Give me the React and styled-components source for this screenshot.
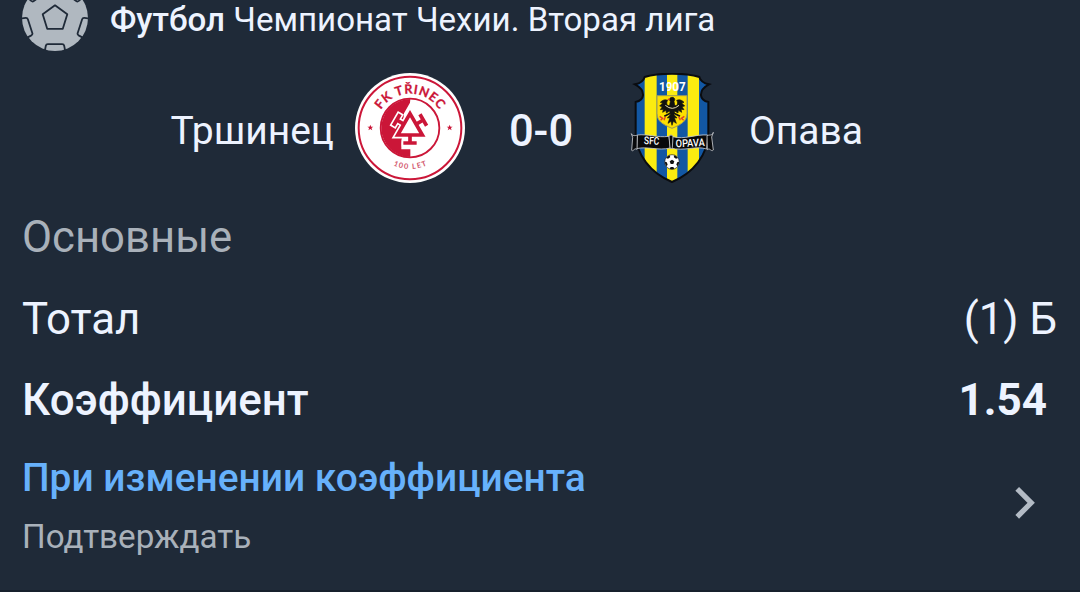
import React from 'react';
import styled, { createGlobalStyle } from 'styled-components';

const RED = '#cb1638';
const BLUE = '#1257a3';
const YELLOW = '#fbec10';
const MUTED = '#a9b1ba';

const GlobalStyle = createGlobalStyle`
  * { box-sizing: border-box; }
  body { margin: 0; background: #1f2a38; }
`;

const Slip = styled.main`
  display: flex;
  flex-direction: column;
  width: 1080px;
  height: 592px;
  overflow: hidden;
  color: #edf3ff;
  background: #1f2a38;
  border-bottom: 2px solid #17202c;
  font-family: Roboto, sans-serif;
`;

const Text = styled.span`
  display: block;
  font-size: ${props => props.$size}px;
  font-weight: ${props => props.$weight || 400};
  color: ${props => props.$color || 'inherit'};
  white-space: pre;
`;

const Header = styled.header`
  display: flex;
  height: 51px;
  padding-left: 22px;
  line-height: 40px;
`;

const BallIcon = styled.svg`
  width: 66px;
  height: 66px;
  margin: -15px 22px 0 0;
  flex: none;
`;

const Match = styled.section`
  display: grid;
  grid-template-columns: 334px 152px 110px 152px 1fr;
  align-items: center;
  height: 110px;
  margin-top: 22px;
  line-height: 52px;
`;

const Side = styled.div`
  padding-top: 5px;
  padding-left: ${props => (props.$align === 'left' ? 1 : 0)}px;
  text-align: ${props => props.$align};
`;

const Score = styled.div`
  padding-top: 7px;
  text-align: center;
`;

const Crest = styled.svg`
  display: block;
  width: 110px;
  height: 110px;
  margin: 0 auto;
`;

const Rows = styled.section`
  margin-top: 14px;
`;

const Row = styled.div`
  display: flex;
  justify-content: space-between;
  height: 81px;
  padding: 0 ${props => props.$end || 23}px 0 22px;
  line-height: ${props => props.$line || 82}px;
`;

const Setting = styled.section`
  display: flex;
  justify-content: space-between;
  align-items: center;
  margin-top: 8px;
  padding: 0 43px 0 22px;
`;

const SettingText = styled.div`
  display: flex;
  flex-direction: column;
  line-height: 59px;
`;

const Chevron = styled.svg`
  width: 24px;
  height: 36px;
  margin-bottom: 9px;
`;

function Football() {
    return (
        <BallIcon viewBox="0 0 66 66" fill="none" stroke="#1f2a38" strokeWidth="1.8" strokeLinejoin="round">
            <circle cx="33" cy="33" r="33" fill="#b0b8c0" stroke="none" />
            <path d="M33 20.3 45.3 29.2 40.8 43.8H25.2L20.7 29.2Z" />
            {[0, 72, 144, 216, 288].map(angle => (
                <path
                    key={angle}
                    d="M22.8 66 23.8 60.8Q24.2 59.2 25.8 59.2H40.2Q41.8 59.2 42.2 60.8L43.2 66"
                    transform={`rotate(${angle} 33 33)`}
                />
            ))}
        </BallIcon>
    );
}

function Arms({ width, bar, color }) {
    return (
        <g fill="none" stroke={color} strokeWidth={width}>
            <path d="M210 161 173 225H247Z" />
            {[0, 120, 240].map(angle => (
                <path
                    key={angle}
                    d={`M210 226V249M${210 - bar} 249H${210 + bar}`}
                    transform={`rotate(${angle} 210 203)`}
                />
            ))}
        </g>
    );
}

function TrinecCrest() {
    const star = 'M0-9 2.4-3 9-3 3.6 1.2 5.8 8 0 4-5.8 8-3.6 1.2-9-3-2.4-3Z';
    return (
        <Crest viewBox="45 39 330 330">
            <defs>
                <path id="trinec-top" d="M107 204A103 103 0 0 1 313 204" />
                <path id="trinec-bottom" d="M87 204A123 123 0 0 0 333 204" />
            </defs>
            <circle cx="210" cy="204" r="165" fill="#fff" />
            <circle cx="210" cy="204" r="154" fill="none" stroke={RED} strokeWidth="6" />
            <path d="M211 117A87 87 0 0 0 211 291V268H184V250L192 160 210 128Z" fill={RED} />
            <circle cx="210" cy="204" r="88" fill="none" stroke={RED} strokeWidth="5.5" />
            <Arms width={21} bar={25} color="#fff" />
            <path d="M210 161 173 225H247Z" fill="#fff" />
            <Arms width={11} bar={20} color={RED} />
            <path d={star} transform="translate(91 203)" fill={RED} />
            <path d={star} transform="translate(329 203)" fill={RED} />
            <text fill={RED} stroke={RED} strokeWidth="0.8" fontFamily="Lato, sans-serif" fontWeight="700" fontSize="38" textAnchor="middle">
                <textPath href="#trinec-top" startOffset="50%" textLength="208">FK TŘINEC</textPath>
            </text>
            <text fill="#d2556b" fontFamily="Lato, sans-serif" fontWeight="700" fontSize="22" textAnchor="middle">
                <textPath href="#trinec-bottom" startOffset="50%" textLength="104">100 LET</textPath>
            </text>
        </Crest>
    );
}

function OpavaCrest() {
    const shield = 'M186 41C155 41 126 44 104 51C101 62 90 70 75 73C92 82 100 92 99 106C98 118 90 123 77 126V222C80 285 120 338 186 366C252 338 292 285 295 222V126C282 123 274 118 273 106C272 92 280 82 297 73C282 70 271 62 268 51C246 44 217 41 186 41Z';
    return (
        <Crest viewBox="21 39 330 330">
            <defs>
                <clipPath id="opava-shield"><path d={shield} /></clipPath>
            </defs>
            <g clipPath="url(#opava-shield)">
                <path d="M60 30H310V370H60Z" fill={BLUE} />
                <path d="M104 30H140V370H104ZM171 30H202V370H171ZM233 30H267V370H233Z" fill={YELLOW} />
            </g>
            <path d={shield} fill="none" stroke="#0a0c10" strokeWidth="6" />
            <text x="187" y="92" fill="#fff" fontFamily="Roboto, sans-serif" fontWeight="700" fontSize="37" textAnchor="middle" textLength="80" lengthAdjust="spacingAndGlyphs">1907</text>
            <path d="M141 107H231V160C231 185 212 194 186 205C160 194 141 185 141 160Z" fill="#fde000" stroke="#9c9a5c" strokeWidth="3" />
            {/* eagle */}
            <g fill="#11120f" stroke="#11120f" strokeWidth="2" strokeLinejoin="round">
                <path d="M186 112C178 113 177 119 181 124L179 136C170 140 168 127 173 121C164 117 157 121 151 127L158 129L149 138L157 140L151 149L160 148L158 157L168 151L169 159L179 153L181 164L172 174L180 173L174 190L183 184L186 196L190 184L199 190L193 173L201 174L192 164L194 153L204 159L205 151L215 157L213 148L222 149L216 140L224 138L215 129L222 127C216 121 209 117 200 121C205 127 203 140 194 136L192 124C197 118 193 112 186 112Z" />
                <path d="M181 160 163 169M192 160 210 169" fill="none" strokeWidth="5" />
            </g>
            <path d="M166 136Q187 154 207 136" fill="none" stroke="#e8dfb0" strokeWidth="3" />
            <path d="M179 116 173 120M149 169 158 175 152 181M166 170 162 181M223 169 214 175 221 181M206 170 211 181" fill="none" stroke="#e0402a" strokeWidth="4" />
            {/* ribbon */}
            <g fill="#08090b" stroke="#c9cbd0" strokeWidth="2.5" strokeLinejoin="round">
                <path d="M82 225C112 221 142 234 177 229L181 264C143 273 112 258 80 266Z" />
                <path d="M188 230C224 240 256 222 293 225L290 267C255 256 224 275 181 264Z" />
                <path d="M64 221C68 230 76 226 82 226L81 268C73 262 70 276 65 271L68 232Z" />
                <path d="M310 217C306 229 298 223 291 227L292 269C300 262 304 277 310 270L305 231Z" />
                <path d="M177 229Q183 220 189 229L187 263Q184 268 180 264Z" />
            </g>
            <g fill="#fff" fontFamily="Roboto, sans-serif" fontWeight="500" fontSize="32">
                <text x="102" y="253" textLength="46" lengthAdjust="spacingAndGlyphs" transform="rotate(3 125 242)">SFC</text>
                <text x="197" y="260" textLength="87" lengthAdjust="spacingAndGlyphs" transform="rotate(-2 240 248)">OPAVA</text>
            </g>
            <circle cx="186" cy="306" r="22" fill="#fff" stroke="#1a1c20" strokeWidth="2" />
            <path d="M186 299 193 304 190 312H182L179 304Z" fill="#111" />
            {[0, 72, 144, 216, 288].map(angle => (
                <path key={angle} d="M179 326 182 321H190L193 326Q186 329 179 326Z" fill="#111" transform={`rotate(${angle} 186 306)`} />
            ))}
        </Crest>
    );
}

export default function App() {
    return (
        <>
            <GlobalStyle />
            <Slip>
                <Header>
                    <Football />
                    <Text $size={33.1} $weight={500}>Футбол</Text>
                    <Text $size={33.1}> Чемпионат Чехии. Вторая лига</Text>
                </Header>
                <Match>
                    <Side $align="right"><Text $size={39}>Тршинец</Text></Side>
                    <TrinecCrest />
                    <Score><Text $size={43.5} $weight={500}>0-0</Text></Score>
                    <OpavaCrest />
                    <Side $align="left"><Text $size={39}>Опава</Text></Side>
                </Match>
                <Rows>
                    <Row $line={81}><Text $size={43.7} $color={MUTED}>Основные</Text></Row>
                    <Row>
                        <Text $size={43.8}>Тотал</Text>
                        <Text $size={43.8}>(1) Б</Text>
                    </Row>
                    <Row $end={33}>
                        <Text $size={43.9} $weight={500}>Коэффициент</Text>
                        <Text $size={44} $weight={700}>1.54</Text>
                    </Row>
                </Rows>
                <Setting>
                    <SettingText>
                        <Text $size={38.9} $weight={500} $color="#67b1fb">При изменении коэффициента</Text>
                        <Text $size={33.2} $color={MUTED}>Подтверждать</Text>
                    </SettingText>
                    <Chevron viewBox="0 0 24 36">
                        <path d="M4.2 3.8 18.2 17.8 4.2 31.8" fill="none" stroke="#b3bbc5" strokeWidth="5.2" />
                    </Chevron>
                </Setting>
            </Slip>
        </>
    );
}
